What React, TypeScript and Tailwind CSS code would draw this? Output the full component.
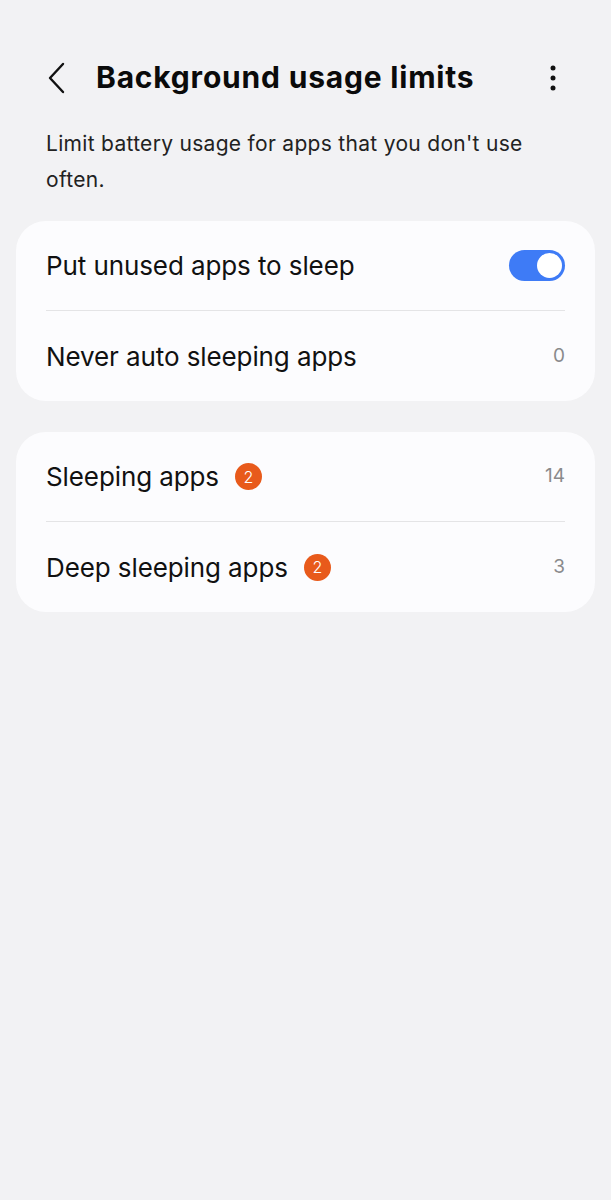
import React from "react";

function Badge({ n }: { n: number }) {
  return (
    <span className="ml-[16px] inline-flex h-[27px] w-[27px] items-center justify-center rounded-full bg-[#e85a1b] text-[16px] font-light text-white">
      {n}
    </span>
  );
}

function Row({
  label,
  right,
  badge,
  divider,
}: {
  label: string;
  right: React.ReactNode;
  badge?: number;
  divider?: boolean;
}) {
  return (
    <div className="px-[30px]">
      <div
        className={
          "flex h-[90px] items-center justify-between " +
          (divider ? "border-b border-[#e4e4e6]" : "")
        }
      >
        <div className="flex items-center">
          <span className="text-[26px] tracking-[-0.1px] text-[#111]">{label}</span>
          {badge !== undefined && <Badge n={badge} />}
        </div>
        {right}
      </div>
    </div>
  );
}

function Toggle() {
  return (
    <div className="flex h-[31px] w-[56px] items-center justify-end rounded-full bg-[#3e7bf6] px-[3px]">
      <div className="h-[25px] w-[25px] rounded-full bg-white" />
    </div>
  );
}

function Count({ v }: { v: string }) {
  return <span className="text-[19px] text-[#8a8a8c]">{v}</span>;
}

export default function App() {
  const font = { fontFamily: "Inter, Roboto, 'Noto Sans', sans-serif" };
  return (
    <div className="min-h-[1200px] w-full bg-[#f2f2f4]" style={font}>
      <div className="flex h-[155px] items-center px-[46px]">
        <div className="flex w-full items-center">
          <svg width="20" height="32" viewBox="0 0 20 32" className="mr-[30px]">
            <path d="M17 2 L4 16 L17 30" stroke="#111" strokeWidth="2.4" fill="none" strokeLinecap="round" strokeLinejoin="round" />
          </svg>
          <h1 className="flex-1 text-[30px] font-bold tracking-[0.8px] text-[#0b0b0b]">
            Background usage limits
          </h1>
          <svg width="8" height="26" viewBox="0 0 8 26" className="mr-[8px]">
            <circle cx="4" cy="3" r="2.5" fill="#111" />
            <circle cx="4" cy="13" r="2.5" fill="#111" />
            <circle cx="4" cy="23" r="2.5" fill="#111" />
          </svg>
        </div>
      </div>
      <p className="-mt-[29px] px-[46px] text-[21px] leading-[36px] tracking-[0.3px] text-[#222]">
        Limit battery usage for apps that you don't use often.
      </p>
      <div className="mt-[23px] px-[16px]">
        <div className="rounded-[30px] bg-[#fcfcfe]">
          <Row label="Put unused apps to sleep" right={<Toggle />} divider />
          <Row label="Never auto sleeping apps" right={<Count v="0" />} />
        </div>
        <div className="mt-[31px] rounded-[30px] bg-[#fcfcfe]">
          <Row label="Sleeping apps" badge={2} right={<Count v="14" />} divider />
          <Row label="Deep sleeping apps" badge={2} right={<Count v="3" />} />
        </div>
      </div>
    </div>
  );
}
